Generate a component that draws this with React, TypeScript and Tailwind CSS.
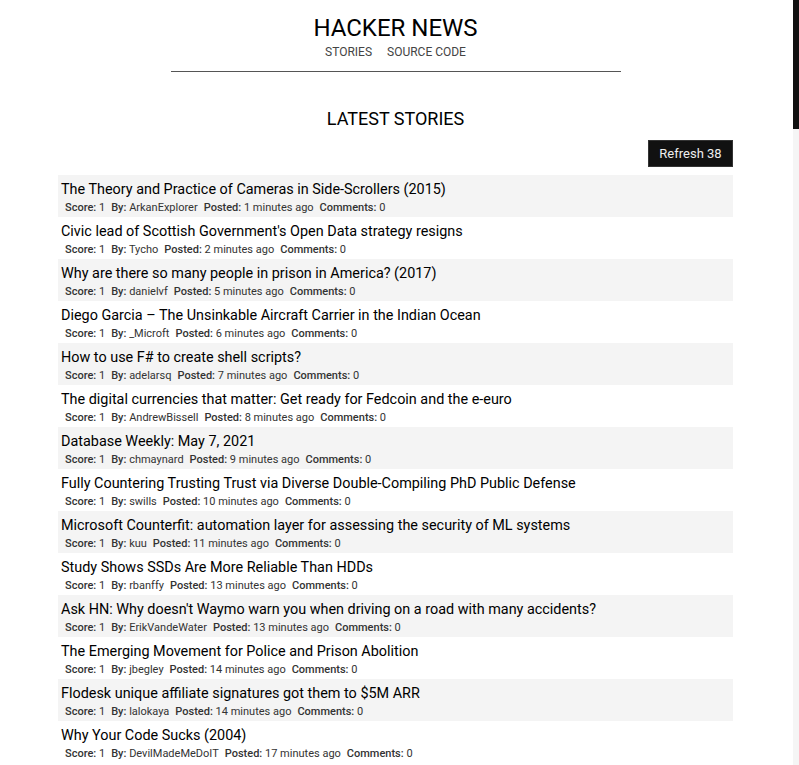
const stories = [
  { title: 'The Theory and Practice of Cameras in Side-Scrollers (2015)', by: 'ArkanExplorer', posted: 1 },
  { title: "Civic lead of Scottish Government's Open Data strategy resigns", by: 'Tycho', posted: 2 },
  { title: 'Why are there so many people in prison in America? (2017)', by: 'danielvf', posted: 5 },
  { title: 'Diego Garcia – The Unsinkable Aircraft Carrier in the Indian Ocean', by: '_Microft', posted: 6 },
  { title: 'How to use F# to create shell scripts?', by: 'adelarsq', posted: 7 },
  { title: 'The digital currencies that matter: Get ready for Fedcoin and the e-euro', by: 'AndrewBissell', posted: 8 },
  { title: 'Database Weekly: May 7, 2021', by: 'chmaynard', posted: 9 },
  { title: 'Fully Countering Trusting Trust via Diverse Double-Compiling PhD Public Defense', by: 'swills', posted: 10 },
  { title: 'Microsoft Counterfit: automation layer for assessing the security of ML systems', by: 'kuu', posted: 11 },
  { title: 'Study Shows SSDs Are More Reliable Than HDDs', by: 'rbanffy', posted: 13 },
  { title: "Ask HN: Why doesn't Waymo warn you when driving on a road with many accidents?", by: 'ErikVandeWater', posted: 13 },
  { title: 'The Emerging Movement for Police and Prison Abolition', by: 'jbegley', posted: 14 },
  { title: 'Flodesk unique affiliate signatures got them to $5M ARR', by: 'lalokaya', posted: 14 },
  { title: 'Why Your Code Sucks (2004)', by: 'DevilMadeMeDoIT', posted: 17 },
];

export default function App() {
  return (
    <div
      className="flex h-screen overflow-hidden bg-white text-[#111]"
      style={{ fontFamily: 'Roboto, "Liberation Sans", sans-serif' }}
    >
      <div className="flex-1 pr-[2px]">
        <header className="flex flex-col items-center pt-[13px]">
          <h1 className="text-[24px] leading-[30px] text-black">HACKER NEWS</h1>
          <nav className="mt-[1px] flex gap-[15px] text-[12px] leading-[16px] text-[#444]">
            <a href="#">STORIES</a>
            <a href="#">SOURCE CODE</a>
          </nav>
          <div className="mt-[11px] h-px w-[450px] bg-[#555]" />
        </header>

        <main className="mx-auto w-[675px]">
          <h2 className="mt-[36px] text-center text-[18px] leading-[22px] text-black">LATEST STORIES</h2>
          <div className="mt-[10px] flex justify-end">
            <button className="h-[27px] w-[85px] border border-[#333] bg-[#111] text-[13px] text-[#eee]">
              Refresh 38
            </button>
          </div>

          <ul className="mt-[8px]">
            {stories.map((s, i) => (
              <li key={i} className={`h-[42px] px-[3px] pt-[6px] ${i % 2 === 0 ? 'bg-[#f4f4f4]' : 'bg-white'}`}>
                <div className="text-[14.4px] leading-[18px] text-black">{s.title}</div>
                <div className="mt-[1px] pl-[4px] text-[11px] leading-[15px] text-[#333]">
                  <span className="font-medium">Score:</span> 1
                  <span className="ml-[6px] font-medium">By:</span> {s.by}
                  <span className="ml-[6px] font-medium">Posted:</span> {s.posted} minutes ago
                  <span className="ml-[6px] font-medium">Comments:</span> 0
                </div>
              </li>
            ))}
          </ul>
        </main>
      </div>

      {/* page scrollbar */}
      <div className="w-[6px] shrink-0 bg-[#f5f5f5]">
        <div className="h-[129px] w-full bg-[#111]" />
      </div>
    </div>
  );
}
